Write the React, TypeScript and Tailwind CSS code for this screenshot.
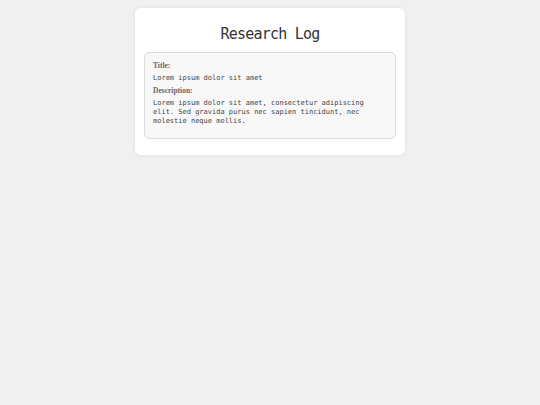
import React from "react";

export default function App() {
  return (
    <div className="min-h-[405px] w-full bg-[#f0f0f0] pt-[8px]">
      <div className="mx-auto w-[270px] rounded-[6px] bg-white px-[9px] pt-[17px] pb-[16px] shadow-[0_0_4px_rgba(0,0,0,0.08)]">
        <h1 className="mb-[9px] text-center font-['DejaVu_Sans_Mono',monospace] text-[15px] leading-[18px] font-medium tracking-[-0.8px] text-[#333]">
          Research Log
        </h1>
        <div className="flex flex-col rounded-[6px] border border-[#dddddd] bg-[#f8f8f8] px-[8px] pt-[8px] pb-[12px] shadow-[0_0_2px_rgba(0,0,0,0.05)]">
          <div className="font-['Liberation_Serif',serif] text-[7.5px] leading-[9px] font-bold text-[#666]">
            Title:
          </div>
          <p className="mt-[4px] font-['DejaVu_Sans_Mono',monospace] text-[7px] leading-[9px] text-[#444]">
            Lorem ipsum dolor sit amet
          </p>
          <div className="mt-[3px] font-['Liberation_Serif',serif] text-[7.5px] leading-[9px] font-bold text-[#666]">
            Description:
          </div>
          <p className="mt-[4px] w-[222px] font-['DejaVu_Sans_Mono',monospace] text-[7px] leading-[9px] text-[#444]">
            Lorem ipsum dolor sit amet, consectetur adipiscing elit. Sed gravida purus nec sapien tincidunt, nec molestie neque mollis.
          </p>
        </div>
      </div>
    </div>
  );
}
